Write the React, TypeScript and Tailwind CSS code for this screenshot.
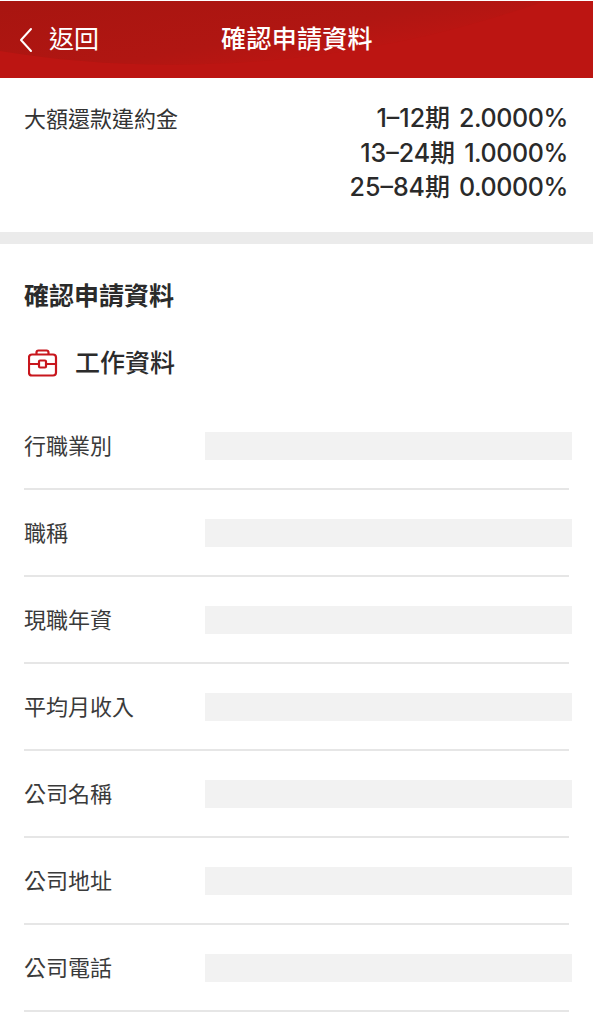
const labels = ["行職業別", "職稱", "現職年資", "平均月收入", "公司名稱", "公司地址", "公司電話"];
const rates = [
  ["1–12期", "2.0000%"],
  ["13–24期", "1.0000%"],
  ["25–84期", "0.0000%"],
];

export default function App() {
  return (
    <div className="w-[593px] h-[1024px] overflow-hidden bg-white font-['Liberation_Sans','Noto_Sans_CJK_TC',sans-serif]">
      <header className="relative mt-px h-[77px] flex items-center bg-[linear-gradient(170deg,#a81510_0%,#b01612_45%,#c01512_70%,#bd1512_100%)] text-white">
        <div className="absolute inset-0 overflow-hidden">
          <svg viewBox="0 0 593 77" className="w-full h-full" preserveAspectRatio="none">
            <path d="M0 50 C150 75 350 70 545 0 L593 0 L593 77 L0 77 Z" fill="#bc1512" />
          </svg>
        </div>
        <svg width="16" height="26" viewBox="0 0 16 26" fill="none" className="relative ml-[18px]" stroke="#fff" strokeWidth="2" strokeLinecap="round" strokeLinejoin="round">
          <path d="M13 2 L3 13 L13 24" />
        </svg>
        <span className="relative ml-[15px] text-[25px] leading-none">返回</span>
        <span className="absolute left-0 right-[-1px] text-center text-[25px] tracking-[0.3px] leading-none font-medium">確認申請資料</span>
      </header>

      <section className="h-[154px] flex justify-between pl-6 pr-[25px] pt-[24px]">
        <span className="text-[22px] leading-[34px] text-[#333] mt-[1px]">大額還款違約金</span>
        <div className="text-right font-['Inter','Noto_Sans_CJK_TC',sans-serif] text-[25px] leading-[34.5px] font-medium text-[#2a2a2a] mt-[-1px]">
          {rates.map(([period, pct]) => (
            <div key={period} className="flex justify-end">
              <span>{period}</span>
              <span className="ml-[9px] tracking-[-0.4px]">{pct}</span>
            </div>
          ))}
        </div>
      </section>

      <div className="h-3 bg-[#ebebeb]" />

      <h2 className="mt-[35px] ml-6 text-[25px] leading-[34px] font-bold text-[#2b2b2b]">確認申請資料</h2>

      <div className="mt-[33px] ml-[28px] flex items-center h-[34px]">
        <svg width="30" height="28" viewBox="0 0 30 28" fill="none" stroke="#c8161d" strokeWidth="2.2" strokeLinejoin="round">
          <rect x="1" y="5.5" width="27" height="21" rx="3" />
          <path d="M8.5 5.5 V3.5 a2 2 0 0 1 2 -2 h8 a2 2 0 0 1 2 2 V5.5" />
          <path d="M1 15 H11 M18 15 H28" />
          <rect x="11" y="11.5" width="7" height="7" rx="1" />
        </svg>
        <span className="ml-[17px] text-[25px] leading-none font-medium text-[#2b2b2b]">工作資料</span>
      </div>

      <div className="mt-[51px] pl-6 pr-[21px]">
        {labels.map((l) => (
          <div key={l} className="h-[87px] pt-[1px]">
            <div className="flex items-center h-[28px]">
              <span className="w-[181px] pt-[1px] text-[22px] leading-none text-[#3a3a3a]">{l}</span>
              <div className="flex-1 h-[28px] bg-[#f2f2f2]" />
            </div>
            <div className="mt-[28px] mr-[3px] h-[2px] bg-[#e6e6e6]" />
          </div>
        ))}
      </div>
    </div>
  );
}
